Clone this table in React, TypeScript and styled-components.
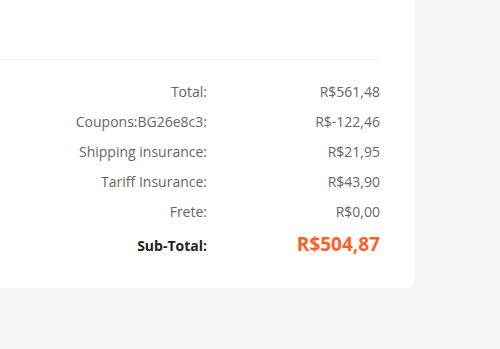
import React from "react"
import styled, { createGlobalStyle } from "styled-components"

const GlobalStyle = createGlobalStyle`
    html, body {
        margin: 0;
        padding: 0;
        background: #f4f5f7;
        font-family: "Open Sans", "Liberation Sans", sans-serif;
    }
`

const Page = styled.div`
    width: 500px;
    height: 349px;
    background: #f4f5f7;
`

const Card = styled.div`
    width: 380px;
    padding: 59px 34px 25px 0;
    background: #fff;
    border-radius: 0 0 6px 0;
`

const Divider = styled.div`
    height: 1px;
    background: #f0f0f0;
    margin-bottom: 17px;
`

const Summary = styled.div`
    display: grid;
    grid-template-columns: 207px 173px;
`

const Label = styled.div<{ $strong?: boolean }>`
    text-align: right;
    font-size: 14px;
    line-height: ${({ $strong }) => ($strong ? "34px" : "30px")};
    color: ${({ $strong }) => ($strong ? "#222" : "#666")};
    font-weight: ${({ $strong }) => ($strong ? 700 : 400)};
    padding-top: ${({ $strong }) => ($strong ? "2px" : "0")};
`

const Value = styled.div<{ $strong?: boolean }>`
    text-align: right;
    font-size: ${({ $strong }) => ($strong ? "19px" : "14px")};
    line-height: ${({ $strong }) => ($strong ? "34px" : "30px")};
    color: ${({ $strong }) => ($strong ? "#ff5f26" : "#666")};
    font-weight: ${({ $strong }) => ($strong ? 700 : 400)};
`

const rows = [
    { label: "Total:", value: "R$561,48" },
    { label: "Coupons:BG26e8c3:", value: "R$-122,46" },
    { label: "Shipping insurance:", value: "R$21,95" },
    { label: "Tariff Insurance:", value: "R$43,90" },
    { label: "Frete:", value: "R$0,00" },
]

export default function App() {
    return (
        <Page>
            <GlobalStyle />
            <Card>
                <Divider />
                <Summary>
                    {rows.map(r => (
                        <React.Fragment key={r.label}>
                            <Label>{r.label}</Label>
                            <Value>{r.value}</Value>
                        </React.Fragment>
                    ))}
                    <Label $strong>Sub-Total:</Label>
                    <Value $strong>R$504,87</Value>
                </Summary>
            </Card>
        </Page>
    )
}
